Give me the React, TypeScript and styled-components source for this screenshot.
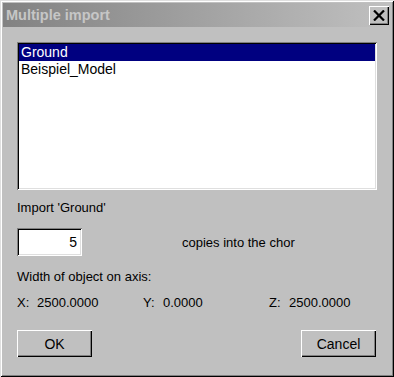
import styled, { createGlobalStyle } from "styled-components";

const GlobalStyle = createGlobalStyle`
  html, body {
    margin: 0;
    padding: 0;
    background: #c0c0c0;
  }
  * {
    box-sizing: border-box;
  }
`;

const Window = styled.div`
  width: 394px;
  height: 377px;
  background: #c0c0c0;
  padding: 3px;
  display: flex;
  flex-direction: column;
  font-family: "Liberation Sans", Arial, sans-serif;
  font-size: 13px;
  color: #000;
  box-shadow: inset 1px 1px 0 #dfdfdf, inset -1px -1px 0 #000,
    inset 2px 2px 0 #fff, inset -2px -2px 0 #808080;
`;

const TitleBar = styled.div`
  height: 24px;
  display: flex;
  align-items: center;
  justify-content: space-between;
  padding: 0 2px 0 3px;
  background: linear-gradient(to right, #828282, #c0c0c0);
`;

const Title = styled.span`
  font-weight: bold;
  font-size: 14.5px;
  color: #c6c6c6;
`;

const CloseButton = styled.button`
  width: 20px;
  height: 19px;
  padding: 0;
  margin: 0;
  border: none;
  background: #c0c0c0;
  display: flex;
  align-items: center;
  justify-content: center;
  box-shadow: inset 1px 1px 0 #fff, inset -1px -1px 0 #000,
    inset -2px -2px 0 #808080;
`;

const Body = styled.div`
  flex: 1;
  display: flex;
  flex-direction: column;
  padding: 15px 14px 0 14px;
`;

const ListBox = styled.div`
  height: 148px;
  background: #fff;
  padding: 2px;
  font-size: 14px;
  box-shadow: inset 1px 1px 0 #808080, inset -1px -1px 0 #fff,
    inset 2px 2px 0 #000, inset -2px -2px 0 #dfdfdf;
  display: flex;
  flex-direction: column;
`;

const ListItem = styled.div<{ $selected?: boolean }>`
  height: 17px;
  line-height: 17px;
  padding-left: 2px;
  background: ${(p) => (p.$selected ? "#000080" : "transparent")};
  color: ${(p) => (p.$selected ? "#fff" : "#000")};
`;

const Label = styled.div<{ $top: number }>`
  margin-top: ${(p) => p.$top}px;
  height: 16px;
  line-height: 16px;
`;

const CountRow = styled.div`
  margin-top: 12px;
  display: flex;
  align-items: center;
`;

const CountInput = styled.input`
  width: 65px;
  height: 28px;
  border: none;
  outline: none;
  background: #fff;
  text-align: right;
  padding: 0 5px 0 4px;
  font-family: inherit;
  font-size: 14px;
  color: #000;
  box-shadow: inset 1px 1px 0 #808080, inset -1px -1px 0 #fff,
    inset 2px 2px 0 #000, inset -2px -2px 0 #dfdfdf;
`;

const CountText = styled.span`
  margin-left: 100px;
`;

const AxisRow = styled.div`
  margin-top: 10px;
  display: grid;
  grid-template-columns: 126px 126px 1fr;
  height: 16px;
  line-height: 16px;
`;

const AxisCell = styled.div`
  display: flex;
`;

const AxisName = styled.span`
  width: 20px;
`;

const ButtonRow = styled.div`
  margin-top: 19px;
  display: flex;
  justify-content: space-between;
  padding-right: 1px;
`;

const PushButton = styled.button`
  width: 75px;
  height: 27px;
  border: none;
  background: #c0c0c0;
  font-family: inherit;
  font-size: 14px;
  color: #000;
  padding: 0;
  box-shadow: inset 1px 1px 0 #fff, inset -1px -1px 0 #000,
    inset -2px -2px 0 #808080;
`;

const axes = [
  { name: "X:", value: "2500.0000" },
  { name: "Y:", value: "0.0000" },
  { name: "Z:", value: "2500.0000" },
];

const App = () => {
  return (
    <>
      <GlobalStyle />
      <Window>
        <TitleBar>
          <Title>Multiple import</Title>
          <CloseButton>
            <svg width="12" height="11" viewBox="0 0 12 11">
              <path
                d="M1 0.5 L11 10.5 M11 0.5 L1 10.5"
                stroke="#000"
                strokeWidth="2.2"
                fill="none"
              />
            </svg>
          </CloseButton>
        </TitleBar>
        <Body>
          <ListBox>
            <ListItem $selected>Ground</ListItem>
            <ListItem>Beispiel_Model</ListItem>
          </ListBox>
          <Label $top={10}>Import 'Ground'</Label>
          <CountRow>
            <CountInput defaultValue="5" />
            <CountText>copies into the chor</CountText>
          </CountRow>
          <Label $top={13}>Width of object on axis:</Label>
          <AxisRow>
            {axes.map((a) => (
              <AxisCell key={a.name}>
                <AxisName>{a.name}</AxisName>
                <span>{a.value}</span>
              </AxisCell>
            ))}
          </AxisRow>
          <ButtonRow>
            <PushButton>OK</PushButton>
            <PushButton>Cancel</PushButton>
          </ButtonRow>
        </Body>
      </Window>
    </>
  );
};

export default App;
